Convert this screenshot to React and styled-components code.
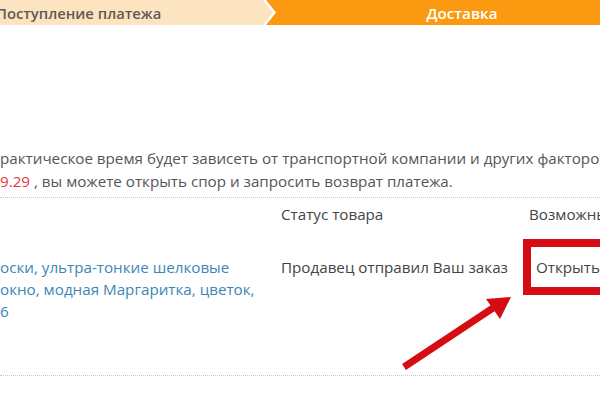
import React from "react";
import styled, { createGlobalStyle } from "styled-components";

const GlobalStyle = createGlobalStyle`
  html, body { margin: 0; padding: 0; background: #fff; }
  body { font-family: "Open Sans", "Noto Sans", sans-serif; overflow: hidden; }
`;

const Page = styled.div`
  position: relative;
  width: 600px;
  height: 400px;
  overflow: hidden;
  background: #fff;
`;

const Steps = styled.div`
  display: flex;
  height: 25px;
  background: #fb9a10;
`;

const DoneStep = styled.div`
  position: relative;
  flex: 0 0 276px;
  display: flex;
  align-items: center;
  background: #fff;
  clip-path: polygon(0 0, 266px 0, 276px 50%, 266px 100%, 0 100%);
  &::before {
    content: "";
    position: absolute;
    inset: 0;
    background: #fde4c1;
    clip-path: polygon(0 0, 263px 0, 273px 50%, 263px 100%, 0 100%);
  }
`;

const StepLabel = styled.span`
  position: relative;
  font-size: ${(p) => (p.$active ? 15.2 : 14.8)}px;
  font-weight: 600;
  color: ${(p) => (p.$active ? "#fff" : "#5e5a55")};
  white-space: nowrap;
  margin-left: ${(p) => p.$offset || 0}px;
`;

const ActiveStep = styled.div`
  flex: 1;
  display: flex;
  align-items: center;
  justify-content: center;
  padding-left: 48px;
`;

const Notice = styled.div`
  margin-top: 122px;
  padding-bottom: 4px;
  font-size: 15.2px;
  line-height: 23px;
  color: #555;
  white-space: nowrap;
  border-bottom: 1px dotted #c8c8c8;
`;

const Line = styled.div``;

const Date = styled.span`
  color: #e4393c;
`;

const Table = styled.div`
  display: grid;
  grid-template-columns: 281px 248px 1fr;
  font-size: 15.2px;
  line-height: 22px;
  color: #444;
  border-bottom: 1px dotted #c8c8c8;
`;

const HeadCell = styled.div`
  padding-top: 5px;
  height: 53px;
  white-space: nowrap;
`;

const Cell = styled.div`
  height: 119px;
  white-space: nowrap;
  color: ${(p) => (p.$link ? "#3a87b5" : "#444")};
  padding-left: ${(p) => p.$pad || 0}px;
`;

const Highlight = styled.div`
  position: absolute;
  left: 523px;
  top: 239px;
  width: 100px;
  height: 56px;
  box-sizing: border-box;
  border: 8px solid #d50d13;
`;

const Arrow = styled.svg`
  position: absolute;
  left: 0;
  top: 0;
  pointer-events: none;
`;

export default function App() {
  return (
    <Page>
      <GlobalStyle />
      <Steps>
        <DoneStep>
          <StepLabel $offset={-4}>Поступление платежа</StepLabel>
        </DoneStep>
        <ActiveStep>
          <StepLabel $active>Доставка</StepLabel>
        </ActiveStep>
      </Steps>
      <Notice>
        <Line>рактическое время будет зависеть от транспортной компании и других факторов.</Line>
        <Line>
          <Date>9.29</Date> , вы можете открыть спор и запросить возврат платежа.
        </Line>
      </Notice>
      <Table>
        <HeadCell />
        <HeadCell>Статус товара</HeadCell>
        <HeadCell>Возможные действия</HeadCell>
        <Cell $link>
          оски, ультра-тонкие шелковые
          <br />
          окно, модная Маргаритка, цветок,
          <br />6
        </Cell>
        <Cell>Продавец отправил Ваш заказ</Cell>
        <Cell $pad={7}>Открыть спор</Cell>
      </Table>
      <Highlight />
      <Arrow width="600" height="400" viewBox="0 0 600 400">
        <line x1="404" y1="367" x2="496" y2="306" stroke="#d50d13" strokeWidth="7" />
        <polygon points="511,297 486,299 500,319" fill="#d50d13" />
      </Arrow>
    </Page>
  );
}
